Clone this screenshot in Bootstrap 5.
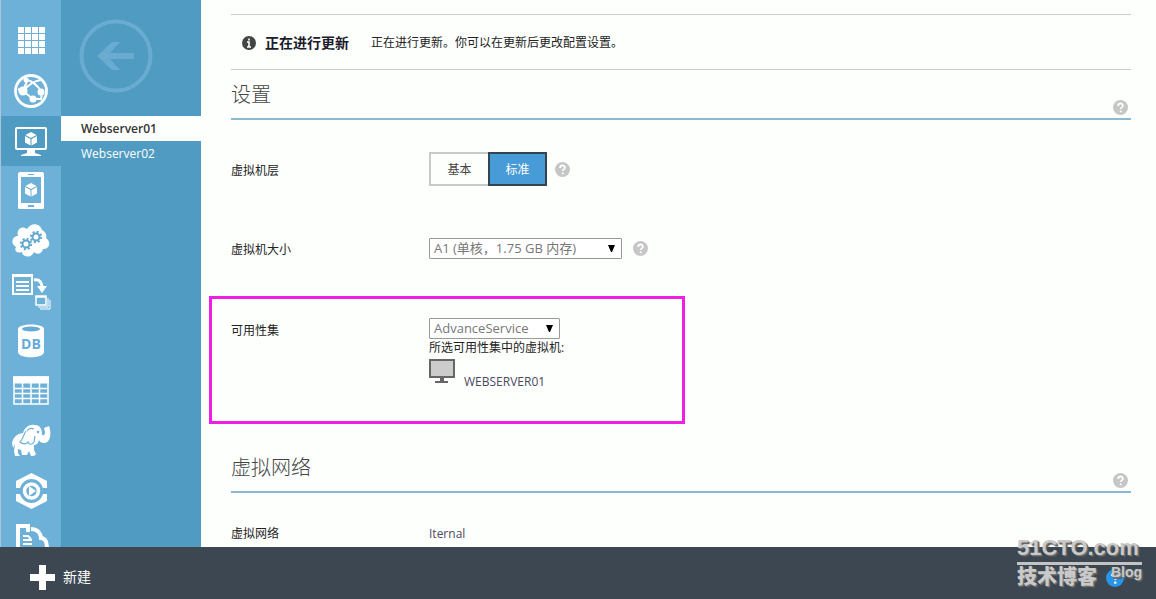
<!DOCTYPE html>
<html lang="zh-CN">
<head>
<meta charset="utf-8">
<meta name="viewport" content="width=device-width, initial-scale=1">
<title>Webserver01</title>
<link href="https://cdn.jsdelivr.net/npm/bootstrap@5.3.0/dist/css/bootstrap.min.css" rel="stylesheet">
<style>
body{font-family:"Open Sans","Noto Sans CJK SC",sans-serif;font-size:12px;line-height:18px;color:#222;background:#fdfffd}
.services{min-height:0}
.rail{width:61px;background:#6db1d9;border-left:1px solid #a9c4dc;padding-top:16px}
.rail a{height:50px;color:#fff}
.rail a.active{background:#4f9bc1}
.rail svg{width:40px;height:40px}
.side{width:140px;background:#4f9bc1}
.back{height:116px;padding:19px 0 0 18px}
.back a{color:#69abd1}
.side .item{height:25px;line-height:25px;padding-left:20px;color:#fff}
.side .item.active{background:#fdfffd;color:#333;font-weight:600}
.content-area{padding:14px 25px 0 30px}
.notice{height:56px;border-top:1px solid #ccc;border-bottom:1px solid #ccc;padding:2px 0 0 11px}
.notice strong{font-size:14px;color:#211a2c;margin:0 22px 0 9px}
.section-title{height:50px;border-bottom:2px solid #8bb9d1;padding-bottom:3px}
.section-title h2{font-size:20px;line-height:30px;font-weight:300;color:#444;margin:10px 0 0}
.help{width:15px;height:15px;flex:none;color:#c6c6c6}
.section-title .help{margin-right:3px}
.setting{display:flex}
.setting>.name{width:198px;flex:none}
.tier{width:118px;height:34px}
.tier label{border:2px solid #c9c9c9;color:#444;line-height:32px;text-align:center}
.tier label:first-of-type{border-right:0}
.tier .btn-check:checked+label{background:#479bd7;border:2px solid #36424e;color:#fff}
.size-row{margin-top:51px}
.pick{appearance:none;height:21px;border:1px solid #999;border-radius:1px;font-size:13px;line-height:19px;color:#777;padding:0 20px 0 4px;background:#fff url("data:image/svg+xml,%3Csvg xmlns='http://www.w3.org/2000/svg' width='8' height='7'%3E%3Cpath d='M0 0h7L4 7H3z'/%3E%3C/svg%3E") no-repeat right 5px top 6px}
.pick-size{width:193px;margin-right:3px}
.pick-set{width:131px}
.marked{border:3px solid #ef20e6;width:476px;height:128px;margin:37px 0 0 -22px;padding:19px}
.member{color:#4c4860}
.network{margin-top:19px}
.command{height:52px;background:#3c4752;color:#fff;padding-left:30px;flex:none}
.command button{font-size:14px;line-height:20px}
.stamp{right:14px;bottom:10px;width:125px;color:#c9c9c9;font-family:"Liberation Sans","Noto Sans CJK SC",sans-serif;font-weight:700;text-shadow:1px 1px 0 #777,2px 2px 1px #555}
.stamp-site{font-size:22px;line-height:28px;border-bottom:3px solid #c4c4c4}
.stamp-name{font-size:20px;line-height:24px;font-weight:900}
.stamp-blog{font-size:14px;line-height:14px;right:0;top:31px}
.help-blue{right:18px;top:35px;color:#2795e9}
</style>
</head>
<body class="vh-100 d-flex flex-column overflow-hidden">
<svg class="d-none" aria-hidden="true">
<symbol id="q" viewBox="0 0 14 14"><circle cx="7" cy="7" r="7" fill="currentColor"/><path d="M4.800 5.500c0-3 4.600-2.900 4.400-.1C9.100 7 7.200 6.800 7.200 8.500M7.200 9.800v1.600" fill="none" stroke="#fff" stroke-width="1.700"/></symbol>
<symbol id="cube" viewBox="0 0 12 14"><path d="M6 0l5.600 3L6 6 .4 3zM0 4l5.500 3v6.500L0 10.500zM12 4L6.500 7v6.500l5.500-3z" fill="currentColor"/></symbol>
</svg>
<div class="services d-flex flex-grow-1 overflow-hidden">
<nav class="rail flex-shrink-0 overflow-hidden" aria-label="服务">
<a href="#" aria-label="所有项目" class="d-flex justify-content-center align-items-center"><svg viewBox="0 0 40 40" fill="none" stroke="#fff" stroke-width="6"><path d="M7 9h27M7 16h27M7 23h27M7 30h27" stroke-dasharray="6 1"/></svg></a>
<a href="#" aria-label="网站" class="d-flex justify-content-center align-items-center"><svg viewBox="0 0 40 40" fill="none" stroke="#fff" stroke-width="2"><circle cx="20" cy="20" r="15.500" stroke-width="2.800"/><path d="M12 20L17 8M12 20l10 8h9M16 9c6 1 10 5 15 12M12 20c5-6 10-10 18-11M7 18l5 2M31 21l-1 8"/><g fill="#fff" stroke="none"><circle cx="12" cy="20" r="4.500"/><circle cx="30" cy="21" r="3.500"/><circle cx="22" cy="28" r="3.500"/><circle cx="15" cy="9" r="2.500"/></g></svg></a>
<a href="#" aria-label="虚拟机" aria-current="page" class="active d-flex justify-content-center align-items-center"><svg viewBox="0 0 40 40"><rect x="5" y="7" width="30" height="21" rx="1" fill="none" stroke="#fff" stroke-width="2"/><path d="M16 28h8v4l6 2v1H10v-1l6-2z" fill="#fff"/><use href="#cube" x="14" y="11" width="12" height="14"/></svg></a>
<a href="#" aria-label="移动服务" class="d-flex justify-content-center align-items-center"><svg viewBox="0 0 40 40"><path fill="#fff" fill-rule="evenodd" d="M9 1h22q2 0 2 2v34q0 1-2 1H9q-2 0-2-1V3q0-2 2-2zm1 5v26h20V6zm7 28v2h6v-2zM17 3v1h6V3z"/><use href="#cube" x="14" y="12" width="12" height="14"/></svg></a>
<a href="#" aria-label="云服务" class="d-flex justify-content-center align-items-center"><svg viewBox="0 0 40 40"><path fill="#fff" d="M7 15c-2-7 4-11 9-7 4-7 13-6 15 1 4 2 5 5 4 8 6 4 3 12-3 11-1 5-6 6-9 3-3 7-12 5-12 0-6 2-8-2-6-5C-1 23 1 15 7 15z"/><g fill="none" stroke="#60a6cf"><circle cx="15" cy="23" r="3.500" stroke-width="2"/><circle cx="15" cy="23" r="5.200" stroke-width="2" stroke-dasharray="2 2.080"/><circle cx="25" cy="16" r="3.500" stroke-width="2"/><circle cx="25" cy="16" r="5.200" stroke-width="2" stroke-dasharray="2 2.080"/></g></svg></a>
<a href="#" aria-label="批处理" class="d-flex justify-content-center align-items-center"><svg viewBox="0 0 40 40" fill="none" stroke="#fff" stroke-width="2"><path d="M2 4h19v19H2zM2 5h19M5 11h13M5 15h13M5 19h13"/><path d="M23 9c6-1 8 3 8 8" stroke-width="3"/><path d="M26 15h10l-5 7z" fill="#fff" stroke="none"/><path d="M25 25h10v9H25zM24 26h11" stroke-width="1.500"/><path d="M37 27v9H27M39 29v9H29" stroke-width="1"/></svg></a>
<a href="#" aria-label="SQL 数据库" class="d-flex justify-content-center align-items-center"><svg viewBox="0 0 40 40"><path d="M7 8c0-6 26-6 26 0v23c0 7-26 7-26 0z" fill="#fff"/><ellipse cx="20" cy="8" rx="9" ry="2.500" fill="#65abd5"/><text x="20" y="28" text-anchor="middle" font-family="Open Sans,sans-serif" font-size="14" font-weight="700" fill="#65abd5">DB</text></svg></a>
<a href="#" aria-label="存储" class="d-flex justify-content-center align-items-center"><svg viewBox="0 0 40 40" fill="none" stroke="#fff"><path d="M3 6h34v27H3zM3 17.500h34M3 22.500h34M3 27.500h34M11.500 12v21M20 12v21M28.500 12v21" stroke-width="1.500"/><path d="M2 9h36" stroke-width="7"/></svg></a>
<a href="#" aria-label="HDInsight" class="d-flex justify-content-center align-items-center"><svg viewBox="0 0 40 40"><path fill="#fff" d="M1 22c1-5 4-9 11-10 2-6 6-9 12-8 5 0 7 4 7 9 1 3 3 1 3-2l-1-4 5-2c3 8 1 17-5 17-3 0-4-1-5-3-1 4-3 5-5 5v5l2 4c-1 2-3 2-5 2l-2-5-2 4h-5l-1-5-3-1v4l2 3H4l-1-5 1-7-2 4z"/><path d="M15 10c-3 4-3 9-6 11 3 3 7 2 8 0 1 3 4 3 6 0l1-6M16 10c2-3 5-3 7-2" fill="none" stroke="#6db1d9" stroke-width="1.200"/><circle cx="27" cy="11" r="1.300" fill="#6db1d9"/></svg></a>
<a href="#" aria-label="媒体服务" class="d-flex justify-content-center align-items-center"><svg viewBox="0 0 40 40"><path d="M5 17v-7L20.500 2 36 10v7h-4c-4-12-19-12-23 0zM5 23v7l15.500 8L36 30v-7h-4c-4 12-19 12-23 0z" fill="#fff"/><circle cx="20.500" cy="20" r="7" fill="none" stroke="#fff" stroke-width="3.500"/><path d="M18 15l7 5-7 5z" fill="#fff"/></svg></a>
<a href="#" aria-label="服务总线" class="d-flex justify-content-center align-items-center"><svg viewBox="0 0 40 40" fill="none" stroke="#fff"><path d="M17 36H7V5h10v6" stroke-width="4"/><path d="M12 15h5l3 3M12 19h9M12 23h9" stroke-width="2"/><path d="M20 8c7 0 10 5 10 9 6 0 6 7 6 11" stroke-width="4"/></svg></a>
</nav>
<aside class="side flex-shrink-0">
<div class="back"><a href="#" aria-label="返回" class="d-inline-block"><svg width="74" height="74" viewBox="0 0 74 74"><circle cx="37" cy="37" r="34.500" fill="none" stroke="currentColor" stroke-width="4"/><path d="M18 37l15-14h8L31 34h24v6H31l10 11h-8z" fill="currentColor"/></svg></a></div>
<a href="#" class="item active d-block text-decoration-none" aria-current="page">Webserver01</a>
<a href="#" class="item d-block text-decoration-none">Webserver02</a>
</aside>
<main class="content-area flex-grow-1 overflow-hidden">
<div class="notice d-flex align-items-center"><svg width="14" height="14" viewBox="0 0 14 14"><circle cx="7" cy="7" r="7" fill="#444"/><path d="M7 2.500v2M5 6h2v5M5 11h4" stroke="#fff" stroke-width="1.600" fill="none"/></svg><strong>正在进行更新</strong><span>正在进行更新。你可以在更新后更改配置设置。</span></div>
<form>
<div class="section-title d-flex justify-content-between align-items-end"><h2 class="align-self-start">设置</h2><svg class="help" role="img" aria-label="帮助"><use href="#q"/></svg></div>
<div class="setting mt-2 pt-4 align-items-center" role="group" aria-labelledby="tier-name"><div class="name pt-1" id="tier-name">虚拟机层</div>
<div class="tier d-flex"><input class="btn-check" type="radio" name="tier" id="basic"><label class="w-50" for="basic">基本</label><input class="btn-check" type="radio" name="tier" id="standard" checked><label class="w-50" for="standard">标准</label></div><svg class="help ms-2" role="img" aria-label="帮助"><use href="#q"/></svg></div>
<div class="setting size-row align-items-center"><label class="name pt-1" for="size">虚拟机大小</label><select id="size" class="pick pick-size"><option>A1 (单核，1.75 GB 内存)</option></select><svg class="help ms-2" role="img" aria-label="帮助"><use href="#q"/></svg></div>
<div class="marked"><div class="setting"><label class="name pt-1" for="avset">可用性集</label><div><select id="avset" class="pick pick-set d-block"><option>AdvanceService</option></select><div>所选可用性集中的虚拟机:</div>
<div class="member d-flex align-items-end"><svg class="me-2" width="27" height="34" viewBox="0 0 27 34"><path d="M1 3h24v17H1z" fill="#ccc" stroke="#666" stroke-width="2"/><path d="M11 21h4v3h4v2H6v-2h5z" fill="#666"/></svg>WEBSERVER01</div></div></div></div>
<div class="section-title network d-flex justify-content-between align-items-end"><h2 class="align-self-start">虚拟网络</h2><svg class="help" role="img" aria-label="帮助"><use href="#q"/></svg></div>
<div class="setting mt-2 pt-4"><div class="name">虚拟网络</div><div class="member">Iternal</div></div>
</form>
</main>
</div>
<footer class="command d-flex align-items-center position-relative">
<button type="button" class="btn p-0 border-0 text-white d-flex align-items-center gap-2 pt-2"><svg width="25" height="25" viewBox="0 0 25 25"><path d="M9 0h7v9h9v7h-9v9H9v-9H0V9h9z" fill="#fff"/></svg>新建</button>
<div class="stamp position-absolute"><div class="stamp-site">51CTO.com</div><div class="stamp-name">技术博客</div><svg class="help-blue position-absolute" width="18" height="18" viewBox="0 0 14 14"><use href="#q"/></svg><span class="stamp-blog position-absolute">Blog</span></div>
</footer>
<script src="https://cdn.jsdelivr.net/npm/bootstrap@5.3.0/dist/js/bootstrap.bundle.min.js"></script>
</body>
</html>
